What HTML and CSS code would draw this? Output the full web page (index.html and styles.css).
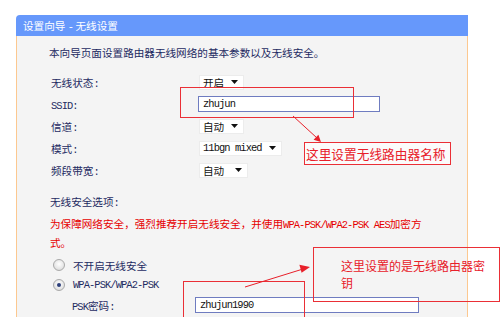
FILE: index.html
```html
<!DOCTYPE html>
<html>
<head>
<meta charset="utf-8">
<link rel="stylesheet" href="styles.css">
</head>
<body>
<div class="page">
  <div class="panel">
    <div class="hd">设置向导 <span class="m">-</span> 无线设置</div>
    <div class="bd">
      <p class="intro">本向导页面设置路由器无线网络的基本参数以及无线安全。</p>
      <div class="form">
        <div class="lbl">无线状态<span class="m">:</span></div>
        <div class="ctl"><div class="sel w1"><span>开启</span><svg width="7" height="4" viewBox="0 0 7 4"><path d="M0 0h7L3.5 4z" fill="#111"/></svg></div></div>
        <div class="lbl"><span class="m">SSID:</span></div>
        <div class="ctl"><div class="inp w-ssid"><span class="m">zhujun</span></div></div>
        <div class="lbl">信道<span class="m">:</span></div>
        <div class="ctl"><div class="sel w1"><span>自动</span><svg width="7" height="4" viewBox="0 0 7 4"><path d="M0 0h7L3.5 4z" fill="#111"/></svg></div></div>
        <div class="lbl">模式<span class="m">:</span></div>
        <div class="ctl"><div class="sel w2"><span class="m">11bgn mixed</span><svg width="7" height="4" viewBox="0 0 7 4"><path d="M0 0h7L3.5 4z" fill="#111"/></svg></div></div>
        <div class="lbl">频段带宽<span class="m">:</span></div>
        <div class="ctl"><div class="sel w3"><span>自动</span><svg width="7" height="4" viewBox="0 0 7 4"><path d="M0 0h7L3.5 4z" fill="#111"/></svg></div></div>
      </div>
      <div class="sec">无线安全选项<span class="m">:</span></div>
      <div class="warn">为保障网络安全，强烈推荐开启无线安全，并使用<span class="m">WPA-PSK/WPA2-PSK AES</span>加密方<br>式。</div>
      <div class="rrow first"><span class="radio"></span><span>不开启无线安全</span></div>
      <div class="rrow"><span class="radio on"></span><span class="m">WPA-PSK/WPA2-PSK</span></div>
      <div class="psk"><div class="lbl2"><span class="m">PSK</span>密码<span class="m">:</span></div><div class="inp w-psk"><span class="m">zhujun1990</span></div></div>
    </div>
  </div>

  <div class="ann a1"></div>
  <div class="ann a2">这里设置无线路由器名称</div>
  <div class="ann a3"><div class="l1">这里设置的是无线路由器密</div><div class="l2">钥</div></div>
  <div class="ann a4"></div>
  <svg class="arrows" width="500" height="317" viewBox="0 0 500 317">
    <line x1="293" y1="116" x2="317" y2="138" stroke="#e8202a" stroke-width="1"/>
    <polygon points="321,142 318.4,134.7 313.6,139.7" fill="#e8202a"/>
    <line x1="245" y1="287" x2="303" y2="269" stroke="#e8202a" stroke-width="1"/>
    <polygon points="310,267 301.6,272.8 299.4,264.8" fill="#e8202a"/>
  </svg>
</div>
</body>
</html>
```
FILE: styles.css
```css
* { box-sizing: border-box; }
html, body { margin: 0; padding: 0; }
body {
  background: #fff;
  font-family: "Noto Sans CJK SC", "Noto Sans", sans-serif;
  font-size: 10.6px;
  color: #1e2b62;
}
.page {
  position: relative;
  width: 500px;
  height: 317px;
  overflow: hidden;
  padding: 15px 0 0 16px;
}
.panel {
  width: 452px;
  height: 302px;
  display: flex;
  flex-direction: column;
}
.hd {
  height: 21px;
  line-height: 21px;
  background: #6698fb;
  color: #fff;
  padding-left: 7px;
  border-radius: 4px 0 0 0;
}
.bd {
  flex: 1;
  background: #f4f4f4;
  border-left: 1px solid #fcc890;
  border-right: 1px solid #fcc890;
  padding: 8px 0 0 32px;
}
.m {
  font-family: "Liberation Mono", "DejaVu Sans Mono", monospace;
  font-size: 10.4px;
  letter-spacing: -0.9px;
}
.intro { margin: 0; line-height: 18px; }
.form {
  margin-top: 9px;
  display: grid;
  grid-template-columns: 150px auto;
  grid-auto-rows: 22px;
  align-items: center;
}
.lbl { padding-left: 2px; }
.ctl { display: flex; align-items: center; }
.sel {
  display: inline-flex;
  align-items: center;
  justify-content: space-between;
  height: 15px;
  line-height: 15px;
  background: #fff;
  border: 1px solid #ececec;
  padding: 0 5px 0 3px;
  color: #111;
}
.sel.w1 { width: 45px; }
.sel.w2 { width: 83px; }
.sel.w3 { width: 49px; }
.inp {
  height: 16px;
  border: 1px solid #6f7cc0;
  background: #fff;
  padding-left: 4px;
  display: flex;
  align-items: center;
  color: #111;
}
.w-ssid { width: 182px; margin-left: -1px; }
.w-psk { width: 224px; }
.sec { margin-top: 12px; line-height: 18px; padding-left: 1px; }
.warn {
  margin-top: 3px;
  line-height: 18px;
  color: #e60000;
  white-space: nowrap;
  padding-left: 1px;
}
.rrow {
  height: 20px;
  display: flex;
  align-items: center;
  gap: 8px;
  padding-left: 4px;
}
.rrow.first { margin-top: 3px; }
.radio {
  width: 12px;
  height: 12px;
  border-radius: 50%;
  border: 1px solid #a9a9a9;
  background: radial-gradient(circle at 50% 40%, #ffffff 0%, #e6e6e6 60%, #cfcfcf 100%);
  display: inline-block;
  position: relative;
}
.radio.on::after {
  content: "";
  position: absolute;
  left: 3px;
  top: 3px;
  width: 4px;
  height: 4px;
  border-radius: 50%;
  background: #2d3f7a;
}
.psk {
  height: 20px;
  display: flex;
  align-items: center;
  padding-left: 23px;
}
.lbl2 { width: 123px; }
.ann {
  position: absolute;
  border: 1px solid #ea2f36;
}
.a1 { left: 180px; top: 87px; width: 174px; height: 31px; }
.a2 {
  left: 304px; top: 142px; width: 147px; height: 23px;
  background: #fbfbfb;
  color: #e8202a;
  font-size: 12.7px;
  line-height: 21px;
  padding-left: 1px;
  white-space: nowrap;
}
.a3 {
  left: 313px; top: 247px; width: 187px; height: 55px;
  color: #e8202a;
  font-size: 12px;
  padding: 9px 0 0 27px;
  white-space: nowrap;
  display: flex;
  flex-direction: column;
}
.a3 .l1, .a3 .l2 { height: 17px; line-height: 17px; }
.a4 { left: 183px; top: 281px; width: 122px; height: 50px; }
.arrows { position: absolute; left: 0; top: 0; pointer-events: none; }
```
